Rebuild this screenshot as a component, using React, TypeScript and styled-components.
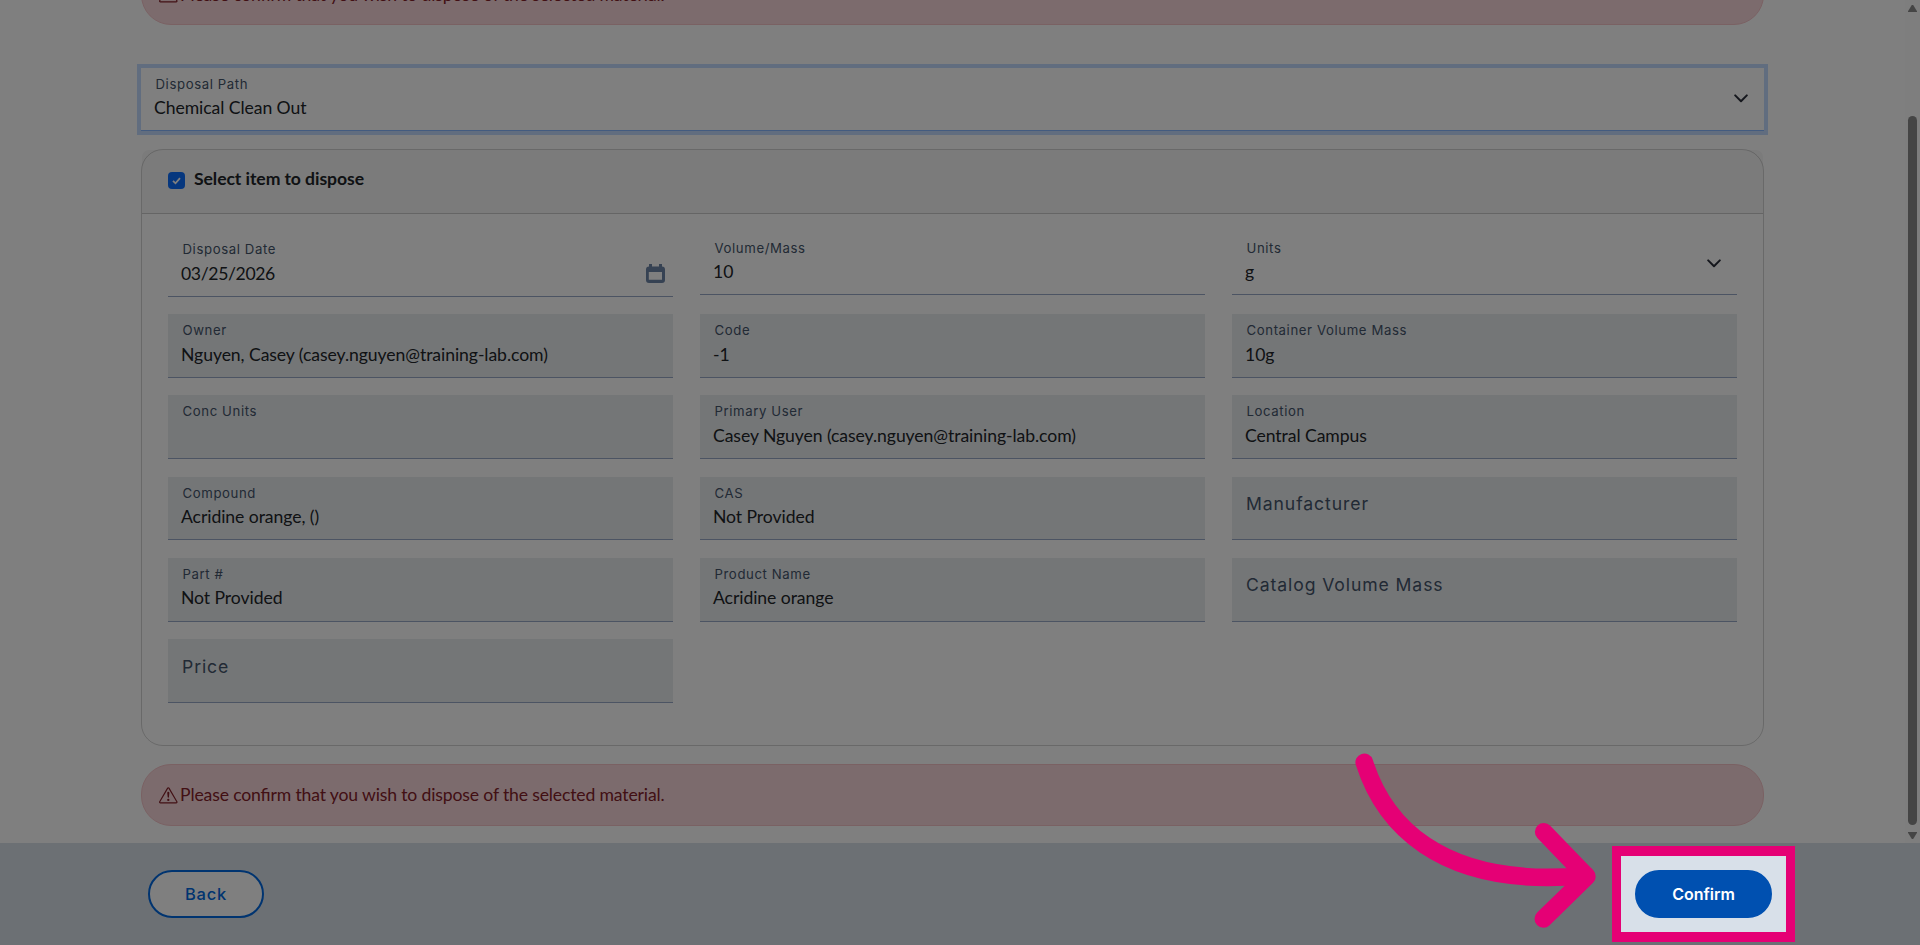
import React from "react";
import styled, { createGlobalStyle, css } from "styled-components";

const GlobalStyle = createGlobalStyle`
  *, *::before, *::after { box-sizing: border-box; }
  html, body { margin: 0; padding: 0; background: #fff; overflow: hidden; }
  body { font-family: Lato, "Liberation Sans", sans-serif; color: #212529; }
`;

const Screen = styled.div`
  position: relative;
  display: flex;
  flex-direction: column;
  width: 1920px;
  height: 945px;
  overflow: hidden;
  background: #fff;
`;

const Body = styled.div`
  display: flex;
  height: 843px;
  overflow: hidden;
`;

const Content = styled.main`
  display: flex;
  flex-direction: column;
  width: 1623px;
  height: 880px;
  flex: none;
  margin-top: -37px;
  margin-left: 141px;
`;

const Alert = styled.div<{ $lift: number }>`
  display: flex;
  align-items: center;
  flex: none;
  height: 62px;
  padding: 0 17px;
  border: 1px solid #f5c2c7;
  border-radius: 30px;
  background: #f8d7da;
  color: #842029;
  font-size: 17.6px;
  letter-spacing: -0.15px;
  font-feature-settings: "liga" 1;

  svg { flex: none; margin-right: 2.5px; }
  span { padding-bottom: ${(p) => p.$lift}px; }
`;

const floatingLabel = css`
  font-family: Inter, "Liberation Sans", sans-serif;
  color: #44546a;
`;

const Label = styled.span<{ $height: number }>`
  ${floatingLabel}
  height: ${(p) => p.$height}px;
  padding-left: 1.5px;
  font-size: 13.2px;
  line-height: 17px;
  letter-spacing: 0.6px;
`;

const RestingLabel = styled.span`
  ${floatingLabel}
  padding-left: 1px;
  font-size: 17.6px;
  line-height: 24px;
  letter-spacing: 0.9px;
`;

const Value = styled.span<{ $tight?: boolean }>`
  height: 24px;
  font-size: 17.6px;
  line-height: 24px;
  letter-spacing: ${(p) => (p.$tight ? -0.36 : -0.07)}px;
  white-space: nowrap;
`;

const PathSelect = styled.div`
  display: flex;
  align-items: flex-start;
  justify-content: space-between;
  flex: none;
  height: 63px;
  margin-top: 43px;
  padding: 8px 16px 0 13px;
  border-bottom: 1px solid #86b7fe;
  box-shadow: 0 0 0 4px #c3daff;
`;

const Stack = styled.div`
  display: flex;
  flex-direction: column;
`;

const Card = styled.section`
  position: relative;
  display: flex;
  flex-direction: column;
  flex: none;
  height: 597px;
  margin: 18px 0;
  padding: 1px;

  &::after {
    content: "";
    position: absolute;
    inset: 0;
    border: 1px solid rgba(0, 0, 0, 0.176);
    border-radius: 22px;
  }
`;

const CardHeader = styled.header`
  display: flex;
  align-items: center;
  gap: 9px;
  height: 64px;
  padding: 0 26px 4px;
  border-bottom: 1px solid rgba(0, 0, 0, 0.176);
  border-radius: 7px 7px 0 0;
  background: #f7f7f7;
  font-size: 17.6px;
  font-weight: 700;
  letter-spacing: -0.08px;
`;

const CardTitle = styled.span`
  padding-bottom: 2px;
`;

const Checkbox = styled.span`
  display: grid;
  place-items: center;
  width: 17px;
  height: 17px;
  margin-top: 2px;
  border-radius: 4px;
  background: #0d6efd;
`;

const FieldGrid = styled.div`
  display: grid;
  grid-template-columns: repeat(3, 505px);
  gap: 17.6px 27px;
  align-items: start;
  padding: 17px 26px;
`;

type FieldKind = "date" | "select" | "input" | "resting" | "locked";

const fieldPadding: Record<FieldKind, string> = {
  date: "10px 8px 0 13px",
  select: "9px 16px 0 13px",
  input: "9px 13px 0",
  resting: "0 13px 7.9px",
  locked: "8px 13px 0",
};

const labelHeight: Record<FieldKind, number> = {
  date: 21,
  select: 20,
  input: 20,
  resting: 24,
  locked: 20.6,
};

const Field = styled.div<{ $kind: FieldKind }>`
  display: flex;
  align-items: ${(p) => (p.$kind === "resting" ? "center" : "flex-start")};
  justify-content: space-between;
  height: ${(p) => (p.$kind === "date" ? 65.6 : 63.65)}px;
  padding: ${(p) => fieldPadding[p.$kind]};
  border-bottom: 1px solid #98a9c6;
  background: ${(p) => (p.$kind === "resting" || p.$kind === "locked" ? "#e9ecef" : "transparent")};
`;

const IconSlot = styled.span<{ $top: number }>`
  display: flex;
  padding-top: ${(p) => p.$top}px;
`;

const ScrollTrack = styled.div`
  display: flex;
  flex-direction: column;
  align-items: center;
  justify-content: space-between;
  width: 15px;
  height: 843px;
  margin-left: auto;
  padding: 5px 0 4px;
  background: #fcfcfc;
`;

const ScrollThumb = styled.div`
  width: 9px;
  height: 709px;
  margin-top: 97px;
  border-radius: 5px;
  background: #8b8b8b;
`;

const Footer = styled.footer`
  display: flex;
  align-items: center;
  justify-content: space-between;
  height: 102px;
  padding: 0 148px;
  background: #d8e0e9;
`;

const Button = styled.button<{ $primary?: boolean }>`
  width: ${(p) => (p.$primary ? 137 : 116)}px;
  height: 48px;
  border: 2px solid ${(p) => (p.$primary ? "#0050b0" : "#0068e0")};
  border-radius: 24px;
  background: ${(p) => (p.$primary ? "#0050b0" : "#fff")};
  color: ${(p) => (p.$primary ? "#fff" : "#0068e0")};
  font-family: Inter, "Liberation Sans", sans-serif;
  font-size: ${(p) => (p.$primary ? 16 : 16.5)}px;
  font-weight: ${(p) => (p.$primary ? 600 : 500)};
  letter-spacing: ${(p) => (p.$primary ? 0 : 0.8)}px;
`;

const Spotlight = styled.div`
  position: absolute;
  left: 1612px;
  top: 846px;
  width: 183px;
  height: 96px;
  border: solid #e50075;
  border-width: 10px 9px;
  box-shadow: 0 0 0 2000px rgba(0, 0, 0, 0.5);
`;

const Pointer = styled.svg`
  position: absolute;
  left: 1340px;
  top: 740px;
`;

const WarningIcon = () => (
  <svg width="18.6" height="18.6" viewBox="0 0 16 16" fill="currentColor">
    <path d="M7.938 2.016A.13.13 0 0 1 8.002 2a.13.13 0 0 1 .063.016.15.15 0 0 1 .054.057l6.857 11.667c.036.06.035.124.002.183a.2.2 0 0 1-.054.06.1.1 0 0 1-.066.017H1.146a.1.1 0 0 1-.066-.017.2.2 0 0 1-.054-.06.18.18 0 0 1 .002-.183L7.884 2.073a.15.15 0 0 1 .054-.057m1.044-.45a1.13 1.13 0 0 0-1.96 0L.165 13.233c-.457.778.091 1.767.98 1.767h13.713c.889 0 1.438-.99.98-1.767z" />
    <path d="M7.002 12a1 1 0 1 1 2 0 1 1 0 0 1-2 0M7.1 5.995a.905.905 0 1 1 1.8 0l-.35 3.507a.552.552 0 0 1-1.1 0z" />
  </svg>
);

const Chevron = () => (
  <svg width="14" height="9" viewBox="0 0 14 9" fill="none" stroke="#2b2f3a" strokeWidth="2" strokeLinecap="round" strokeLinejoin="round">
    <path d="M1.2 1.4 7 7.2l5.8-5.8" />
  </svg>
);

const Calendar = () => (
  <svg width="19" height="19" viewBox="0 0 19 19" fill="#6d84a6">
    <path fillRule="evenodd" d="M3 0h3v2.5h7V0h3v2.5a3 3 0 0 1 3 3V16a3 3 0 0 1-3 3H3a3 3 0 0 1-3-3V5.5a3 3 0 0 1 3-3zM2.8 8v7.8h13.2V8z" />
  </svg>
);

const Check = () => (
  <svg width="9" height="8" viewBox="0 0 9 8" fill="none" stroke="#fff" strokeWidth="1.8">
    <path d="M1 3.8 3.5 6.3 8 1.2" />
  </svg>
);

type FieldData = { label: string; value?: string; kind?: FieldKind };

const fields: FieldData[] = [
  { label: "Disposal Date", value: "03/25/2026", kind: "date" },
  { label: "Volume/Mass", value: "10", kind: "input" },
  { label: "Units", value: "g", kind: "select" },
  { label: "Owner", value: "Nguyen, Casey (casey.nguyen@training-lab.com)" },
  { label: "Code", value: "-1" },
  { label: "Container Volume Mass", value: "10g" },
  { label: "Conc Units" },
  { label: "Primary User", value: "Casey Nguyen (casey.nguyen@training-lab.com)" },
  { label: "Location", value: "Central Campus" },
  { label: "Compound", value: "Acridine orange, ()" },
  { label: "CAS", value: "Not Provided" },
  { label: "Manufacturer", kind: "resting" },
  { label: "Part #", value: "Not Provided" },
  { label: "Product Name", value: "Acridine orange" },
  { label: "Catalog Volume Mass", kind: "resting" },
  { label: "Price", kind: "resting" },
];

const FormField = ({ label, value, kind = "locked" }: FieldData) => {
  if (kind === "resting") {
    return (
      <Field $kind={kind}>
        <RestingLabel>{label}</RestingLabel>
      </Field>
    );
  }
  return (
    <Field $kind={kind}>
      <Stack>
        <Label $height={labelHeight[kind]}>{label}</Label>
        <Value $tight={kind === "date"}>{value}</Value>
      </Stack>
      {kind === "date" && <IconSlot $top={23}><Calendar /></IconSlot>}
      {kind === "select" && <IconSlot $top={19}><Chevron /></IconSlot>}
    </Field>
  );
};

const Warning = ({ lift = 2 }: { lift?: number }) => (
  <Alert $lift={lift}>
    <WarningIcon />
    <span>Please confirm that you wish to dispose of the selected material.</span>
  </Alert>
);

export default function App() {
  return (
    <>
      <GlobalStyle />
      <Screen>
        <Body>
          <Content>
            <Warning lift={0} />
            <PathSelect>
              <Stack>
                <Label $height={20}>Disposal Path</Label>
                <Value>Chemical Clean Out</Value>
              </Stack>
              <IconSlot $top={18}><Chevron /></IconSlot>
            </PathSelect>
            <Card>
              <CardHeader>
                <Checkbox><Check /></Checkbox>
                <CardTitle>Select item to dispose</CardTitle>
              </CardHeader>
              <FieldGrid>
                {fields.map((f) => <FormField key={f.label} {...f} />)}
              </FieldGrid>
            </Card>
            <Warning />
          </Content>
          <ScrollTrack>
            <svg width="9" height="7" viewBox="0 0 9 7" fill="#8b8b8b"><path d="M3.5.6a1.2 1.2 0 0 1 2 0L9 6.2V7H0v-.8z" /></svg>
            <ScrollThumb />
            <svg width="9" height="7" viewBox="0 0 9 7" fill="#8b8b8b"><path d="M3.5 6.4a1.2 1.2 0 0 0 2 0L9 .8V0H0v.8z" /></svg>
          </ScrollTrack>
        </Body>
        <Footer>
          <Button>Back</Button>
          <Button $primary>Confirm</Button>
        </Footer>
        <Spotlight />
        <Pointer width="270" height="205" viewBox="1340 740 270 205" fill="none" stroke="#e50075" strokeWidth="17.8" strokeLinecap="round" strokeLinejoin="round">
          <path d="M1364.3 762.4C1382 818 1434 890 1586 875.5" />
          <path d="M1543.8 831.8 1586.8 876.5 1543.4 918.8" />
        </Pointer>
      </Screen>
    </>
  );
}
